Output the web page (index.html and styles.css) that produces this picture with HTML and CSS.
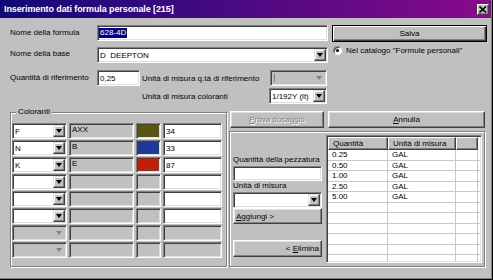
FILE: index.html
```html
<!DOCTYPE html>
<html lang="it">
<head>
  <meta charset="UTF-8" />
  <title>Inserimento dati formula personale</title>
  <link rel="stylesheet" href="styles.css">
</head>
<body>
  <div class="window">
    <div class="frame">

      <!-- Title bar -->
      <div class="titlebar">
        <span class="title">Inserimento dati formula personale [215]</span>
        <span class="close">
          <svg width="8" height="7" viewBox="0 0 8 7"><path d="M0.5 0.5 L7 6.5 M7 0.5 L0.5 6.5" stroke="#000" stroke-width="1.6"/></svg>
        </span>
      </div>

      <div class="content">
        <!-- Header fields -->
        <div class="top">
          <span class="lbl">Nome della formula</span>
          <div class="field name-field"><span class="sel">628-4D</span></div>
          <button class="btn btn-default">Salva</button>

          <span class="lbl lbl-up">Nome della base</span>
          <div class="field combo"><span class="val">D&nbsp; DEEPTON</span><span class="drop"></span></div>
          <div class="radio-row"><span class="radio"></span>Nel catalogo "Formule personali"</div>

          <span class="lbl">Quantità di riferimento</span>
          <div class="line">
            <div class="field qty">0,25</div>
            <span class="inline-lbl">Unità di misura q.tà di riferimento</span>
            <div class="field combo off ref-unit"><span class="caret"></span><span class="drop"></span></div>
          </div>
          <div></div>

          <div></div>
          <div class="line indent">
            <span>Unità di misura coloranti</span>
            <div class="field combo col-unit"><span class="val">1/192Y (lt)</span><span class="drop"></span></div>
          </div>
          <div></div>
        </div>

        <div class="bottom">
          <!-- Colorants -->
          <fieldset class="group colorants">
            <legend>Coloranti</legend>
            <div class="color-grid">
              <div class="field combo"><span class="val">F</span><span class="drop"></span></div>
              <div class="field gray">AXX</div>
              <div class="field swatch" style="background:#5a5612"></div>
              <div class="field">34</div>

              <div class="field combo"><span class="val">N</span><span class="drop"></span></div>
              <div class="field gray">B</div>
              <div class="field swatch" style="background:#1e3a98"></div>
              <div class="field">33</div>

              <div class="field combo"><span class="val">K</span><span class="drop"></span></div>
              <div class="field gray">E</div>
              <div class="field swatch" style="background:#c0200a"></div>
              <div class="field">87</div>

              <div class="field combo"><span class="val"></span><span class="drop"></span></div>
              <div class="field gray"></div>
              <div class="field gray"></div>
              <div class="field"></div>

              <div class="field combo"><span class="val"></span><span class="drop"></span></div>
              <div class="field gray"></div>
              <div class="field gray"></div>
              <div class="field"></div>

              <div class="field combo"><span class="val"></span><span class="drop"></span></div>
              <div class="field gray"></div>
              <div class="field gray"></div>
              <div class="field"></div>

              <div class="field combo off"><span class="val"></span><span class="drop"></span></div>
              <div class="field gray"></div>
              <div class="field gray"></div>
              <div class="field gray"></div>

              <div class="field combo off"><span class="val"></span><span class="drop"></span></div>
              <div class="field gray"></div>
              <div class="field gray"></div>
              <div class="field gray"></div>
            </div>
          </fieldset>

          <!-- Right side -->
          <div class="side">
            <div class="side-buttons">
              <button class="btn btn-off test-btn"><u>P</u>rova dosaggio</button>
              <button class="btn cancel-btn"><u>A</u>nnulla</button>
            </div>
            <div class="group pack">
              <div class="pack-form">
                <span class="small-lbl">Quantità della pezzatura</span>
                <div class="field pack-qty"></div>
                <span class="small-lbl">Unità di misura</span>
                <div class="field combo pack-unit"><span class="val"></span><span class="drop"></span></div>
                <button class="btn add-btn"><u>A</u>ggiungi &gt;</button>
                <button class="btn del-btn">&lt; <u>E</u>limina</button>
              </div>
              <div class="list">
                <div class="list-head">
                  <span class="hcell c1">Quantità</span>
                  <span class="hcell c2">Unità di misura</span>
                  <span class="hcell c3"></span>
                </div>
                <div class="list-body">
                  <div class="lrow"><span class="c1">0.25</span><span class="c2">GAL</span><span class="c3"></span></div>
                  <div class="lrow"><span class="c1">0.50</span><span class="c2">GAL</span><span class="c3"></span></div>
                  <div class="lrow"><span class="c1">1.00</span><span class="c2">GAL</span><span class="c3"></span></div>
                  <div class="lrow"><span class="c1">2.50</span><span class="c2">GAL</span><span class="c3"></span></div>
                  <div class="lrow"><span class="c1">5.00</span><span class="c2">GAL</span><span class="c3"></span></div>
                  <div class="lrow"><span class="c1"></span><span class="c2"></span><span class="c3"></span></div>
                  <div class="lrow"><span class="c1"></span><span class="c2"></span><span class="c3"></span></div>
                  <div class="lrow"><span class="c1"></span><span class="c2"></span><span class="c3"></span></div>
                  <div class="lrow"><span class="c1"></span><span class="c2"></span><span class="c3"></span></div>
                  <div class="lrow"><span class="c1"></span><span class="c2"></span><span class="c3"></span></div>
                  <div class="lrow"><span class="c1"></span><span class="c2"></span><span class="c3"></span></div>
                </div>
              </div>
            </div>
          </div>
        </div>
      </div>

    </div>
  </div>
</body>
</html>
```

FILE: styles.css
```css
/* Reset & base */
*, *::before, *::after { margin:0; padding:0; box-sizing:border-box; }
body {
  font-family: "Liberation Sans", Arial, sans-serif; font-size:8px; color:#000;
  background:#c0c0c0; width:493px; height:280px; overflow:hidden;
}

/* Window frame */
.window { width:493px; height:280px; border-right:1px solid #000; border-bottom:1px solid #000; }
.frame { height:100%; border-right:1px solid #808080; border-bottom:1px solid #808080; background:#c0c0c0; }

.titlebar {
  height:18px; display:flex; align-items:center; justify-content:space-between;
  padding:0 2px 0 4px; background:linear-gradient(90deg, #10087a, #880a8a);
}
.title { color:#fff; font-weight:bold; font-size:9px; letter-spacing:-0.1px; }
.close {
  width:12px; height:11px; display:flex; align-items:center; justify-content:center;
  background:#c0c0c0; border:1px solid; border-color:#fff #404040 #404040 #fff;
  box-shadow: inset -1px -1px #808080;
}

.content { padding:7px 0 0 10px; }

/* Sunken field */
.field {
  height:16px; display:flex; align-items:center; padding:0 2px; background:#fff;
  border:1px solid; border-color:#808080 #fff #fff #808080;
  box-shadow: inset 1px 1px #404040, inset -1px -1px #dfdfdf;
  white-space:nowrap; overflow:hidden;
}
.field.gray { background:#c0c0c0; align-items:flex-start; padding-top:1px; }
.combo { padding-right:0; }
.combo .val { flex:1; overflow:hidden; }
.drop {
  width:12px; height:12px; margin-left:auto; margin-right:1px; flex:none;
  display:flex; align-items:center; justify-content:center; background:#c0c0c0;
  border:1px solid; border-color:#dfdfdf #404040 #404040 #dfdfdf;
  box-shadow: inset -1px -1px #808080, inset 1px 1px #fff;
}
.drop::after {
  content:""; border-top:4px solid #000; border-left:3.5px solid transparent; border-right:3.5px solid transparent;
}
.combo.off { background:#c0c0c0; }
.combo.off .drop { border-color:transparent; box-shadow:none; }
.combo.off .drop::after { border-top-color:#808080; }
.caret { width:1px; height:8px; background:#808080; margin-left:1px; }

/* Buttons */
.btn {
  font:inherit; color:#000; background:#c0c0c0; cursor:default;
  border:1px solid; border-color:#fff #404040 #404040 #fff;
  box-shadow: inset -1px -1px #808080, inset 1px 1px #dfdfdf;
}
.btn-default {
  border-color:#000;
  box-shadow: inset 1px 1px #fff, inset -1px -1px #404040, inset -2px -2px #808080;
}
.btn-off { color:#808080; text-shadow:1px 1px #fff; }

/* Header grid */
.top {
  display:grid; grid-template-columns:83px 231px 155px; column-gap:4px;
  grid-template-rows:22px 23px 18px 16px; align-items:start;
}
.lbl { line-height:16px; }
.lbl-up { line-height:12px; padding-top:1px; }
.name-field { padding-left:1px; height:16px; }
.sel { background:#000080; color:#fff; line-height:10px; padding:0 1px; }
.top .btn-default { height:17px; }
.radio-row { display:flex; align-items:center; gap:4px; height:10px; margin:-2px 0 0 1px; }
.radio {
  width:9px; height:9px; border-radius:50%; background:#fff; position:relative;
  border:1px solid; border-color:#808080 #fff #fff #808080;
  box-shadow: inset 1px 1px #404040;
}
.radio::after {
  content:""; position:absolute; left:2px; top:2px; width:3px; height:3px; border-radius:50%; background:#000;
}
.line { display:flex; align-items:center; height:16px; }
.qty { width:43px; padding-left:2px; }
.inline-lbl { margin-left:2px; }
.ref-unit { width:57px; margin-left:auto; margin-right:1px; }
.indent { padding-left:45px; }
.col-unit { width:58px; margin-left:auto; margin-right:1px; }

/* Bottom area */
.bottom { display:flex; align-items:flex-start; margin-top:3px; }

.group {
  border:1px solid #808080;
  box-shadow: inset 1px 1px #fff, 1px 1px #fff;
}
.colorants { width:217px; height:160px; padding:6px 0 0 1px; min-width:0; }
.colorants legend { margin-left:4px; padding:0 2px; line-height:10px; background:#c0c0c0; }
.color-grid {
  display:grid; grid-template-columns:55px 65px 25px 59px; column-gap:2px; row-gap:1px;
  grid-auto-rows:16px;
}
.color-grid .field { height:16px; }
.swatch { padding:0; }

/* Right column */
.side { width:256px; margin-left:2px; padding-top:4px; }
.side-buttons { display:flex; justify-content:space-between; }
.side-buttons .btn { height:17px; }
.test-btn { width:94px; margin-left:1px; }
.cancel-btn { width:157px; }

.pack { margin-top:3px; height:136px; display:flex; align-items:flex-start; padding:1px 0 0 3px; }
.pack-form { width:89px; display:flex; flex-direction:column; padding-top:22px; }
.small-lbl { line-height:10px; }
.pack-qty { height:15px; margin-top:1px; }
.pack-unit { height:16px; margin-top:1px; }
.add-btn { height:16px; text-align:left; padding-left:2px; }
.del-btn { height:17px; margin-top:16px; text-align:right; padding-right:2px; }

/* List view */
.list {
  width:156px; height:128px; margin:2px 0 0 4px; background:#fff; overflow:hidden;
  border:1px solid; border-color:#808080 #fff #fff #808080;
  box-shadow: inset 1px 1px #404040, inset -1px -1px #dfdfdf;
  padding:1px;
}
.list-head { display:flex; height:13px; }
.hcell {
  height:13px; line-height:11px; padding-left:4px; background:#c0c0c0;
  border:1px solid; border-color:#fff #404040 #404040 #fff;
  box-shadow: inset -1px -1px #808080;
}
.c1 { width:60px; }
.c2 { width:68px; }
.c3 { width:22px; }
.lrow { display:flex; height:10.5px; line-height:10px; border-bottom:1px solid #c8c8c8; }
.lrow span { padding-left:4px; border-right:1px solid #c8c8c8; }
```
